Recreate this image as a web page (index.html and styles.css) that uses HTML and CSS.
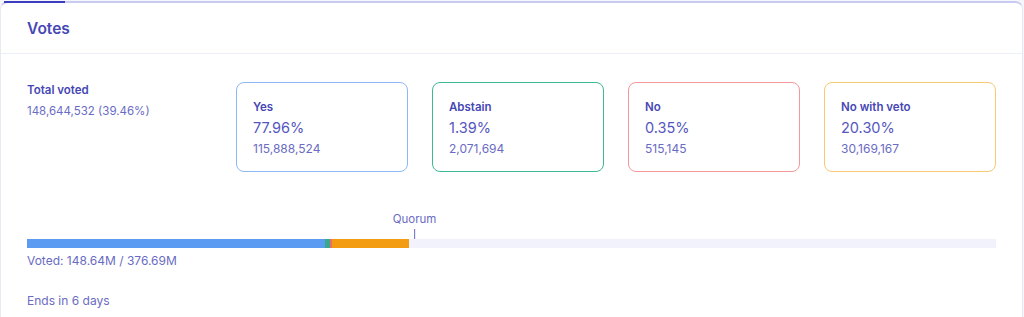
FILE: index.html
```html
<!DOCTYPE html>
<html>
<head>
    <meta charset="UTF-8">
    <meta name="viewport" content="width=device-width, initial-scale=1.0">
    <title>Votes</title>
    <link rel="stylesheet" href="styles.css">
</head>
<body>
<div class="card">
    <div class="card-header">
        <h2 class="card-title">Votes</h2>
    </div>
    <div class="card-body">
        <div class="stats">
            <div class="total">
                <div class="total-label">Total voted</div>
                <div class="total-value">148,644,532 (39.46%)</div>
            </div>
            <div class="option option-yes">
                <div class="option-name">Yes</div>
                <div class="option-percent">77.96%</div>
                <div class="option-count">115,888,524</div>
            </div>
            <div class="option option-abstain">
                <div class="option-name">Abstain</div>
                <div class="option-percent">1.39%</div>
                <div class="option-count">2,071,694</div>
            </div>
            <div class="option option-no">
                <div class="option-name">No</div>
                <div class="option-percent">0.35%</div>
                <div class="option-count">515,145</div>
            </div>
            <div class="option option-veto">
                <div class="option-name">No with veto</div>
                <div class="option-percent">20.30%</div>
                <div class="option-count">30,169,167</div>
            </div>
        </div>
        <div class="progress-wrapper">
            <div class="quorum" style="left: 40%;">
                <span class="quorum-label">Quorum</span>
                <span class="quorum-tick"></span>
            </div>
            <div class="progress">
                <div class="progress-part part-yes" style="width: 30.76%;"></div>
                <div class="progress-part part-abstain" style="width: 0.55%;"></div>
                <div class="progress-part part-no" style="width: 0.14%;"></div>
                <div class="progress-part part-veto" style="width: 8.01%;"></div>
            </div>
        </div>
        <p class="voted">Voted: 148.64M / 376.69M</p>
        <p class="ends">Ends in 6 days</p>
    </div>
</div>
</body>
</html>
```

FILE: styles.css
```css
body {
    margin: 0;
    background-color: #f5f6fb;
    font-family: Inter, "Noto Sans", sans-serif;
    color: #6a6bc3;
    overflow: hidden;
}
.card {
    position: relative;
    margin: 1px 1px 0 0;
    height: 316px;
    box-sizing: border-box;
    background-color: #fff;
    border: 1px solid #e8e9f3;
    border-top: 2px solid #c9caef;
    border-bottom: none;
    border-radius: 8px 8px 0 0;
}
.card::before {
    content: "";
    position: absolute;
    top: -2px;
    left: 3px;
    width: 61px;
    height: 2px;
    background-color: #3a3dbd;
}
.card-header {
    height: 50px;
    padding: 0 26px;
    display: flex;
    align-items: center;
    border-bottom: 1px solid #eceef8;
}
.card-title {
    margin: 0;
    font-size: 15.5px;
    font-weight: 600;
    color: #4647b5;
}
.card-body {
    padding: 28px 26px 0 26px;
}
.stats {
    display: flex;
    gap: 24px;
}
.total {
    flex: 1;
    margin-right: -23px;
    padding-top: 1px;
}
.total-label {
    font-size: 11.5px;
    font-weight: 600;
    line-height: 14px;
    color: #4647b5;
}
.total-value {
    margin-top: 7px;
    font-size: 11.5px;
    line-height: 14px;
}
.option {
    width: 139px;
    height: 71px;
    padding: 16px 15px 1px 16px;
    border: 1px solid;
    border-radius: 8px;
}
.option-yes { border-color: #8db8f6; }
.option-abstain { border-color: #3dba95; }
.option-no { border-color: #f6979b; }
.option-veto { border-color: #f8c874; }
.option-name {
    font-size: 11.5px;
    font-weight: 600;
    line-height: 16px;
    color: #4647b5;
}
.option-percent {
    margin-top: 4px;
    font-size: 14.5px;
    line-height: 18px;
    color: #5557bf;
}
.option-count {
    margin-top: 5px;
    font-size: 12px;
    line-height: 14px;
}
.progress-wrapper {
    position: relative;
    margin-top: 67px;
}
.quorum {
    position: absolute;
    bottom: 9px;
    display: flex;
    flex-direction: column;
    align-items: center;
    transform: translateX(-50%);
}
.quorum-label {
    font-size: 11.5px;
    line-height: 14px;
    margin-bottom: 3px;
}
.quorum-tick {
    width: 1px;
    height: 10px;
    background-color: #6a6bc3;
}
.progress {
    display: flex;
    height: 9px;
    background-color: #f1f2fc;
}
.part-yes { background-color: #5b9bf2; }
.part-abstain { background-color: #3aa88a; }
.part-no { background-color: #ef6b6b; }
.part-veto { background-color: #f39c12; }
.voted {
    margin: 6px 0 0;
    font-size: 12px;
    line-height: 14px;
}
.ends {
    margin: 26px 0 0;
    font-size: 12px;
    line-height: 14px;
}
```
